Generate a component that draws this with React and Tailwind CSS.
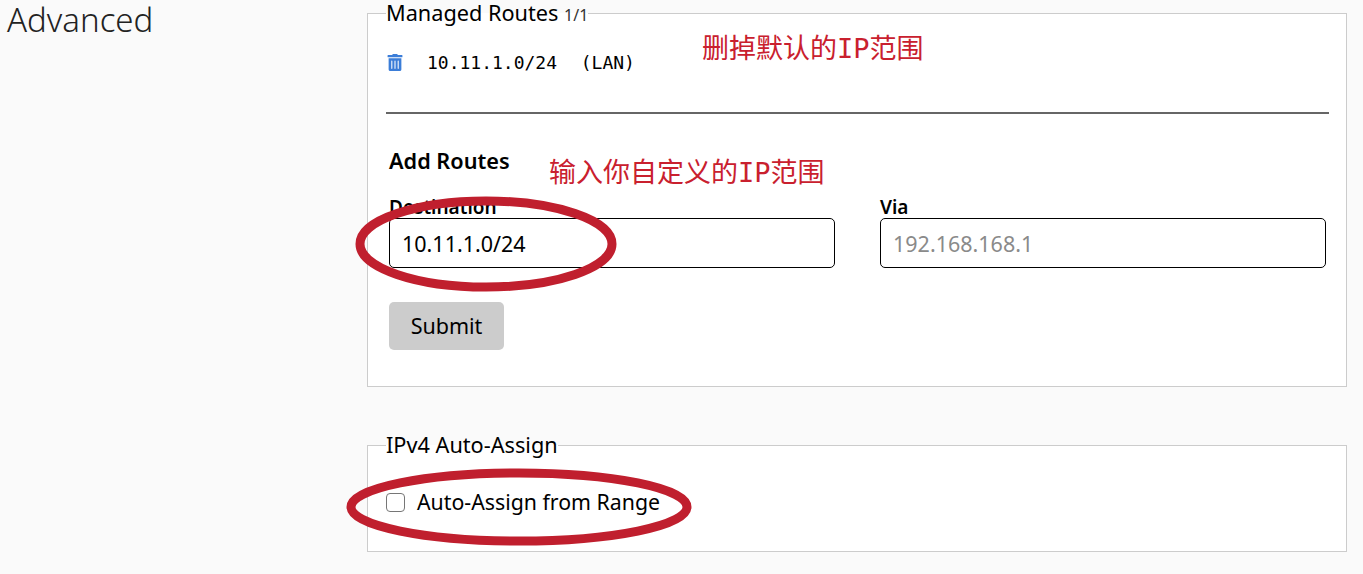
import { FaTrashAlt } from "react-icons/fa";

const ubuntu = "font-['Noto_Sans','Open_Sans',sans-serif]";
const note =
  "absolute whitespace-nowrap text-[27px] leading-[36px] text-[#c9202e] font-['DejaVu_Sans_Mono','Noto_Sans_CJK_SC',monospace]";

function Field({ label, value, placeholder }) {
  return (
    <label className="block w-[446px]">
      <span className="block h-[23px] text-[19px] leading-[24px] font-semibold text-black">
        {label}
      </span>
      <input
        readOnly
        value={value}
        placeholder={placeholder}
        className="block h-[50px] w-full rounded-[5px] border border-black bg-white px-3 text-[21.5px] text-black outline-none placeholder:text-[#8a8a8a]"
      />
    </label>
  );
}

export default function App() {
  return (
    <div className={`relative flex min-h-[574px] bg-[#fafafa] ${ubuntu}`}>
      {/* Section title */}
      <div className="w-[367px] shrink-0 pl-[7px]">
        <h2 className="text-[33px] leading-[40px] font-light text-[#222]">Advanced</h2>
      </div>

      <div className="w-[980px] shrink-0">
        {/* Managed routes */}
        <fieldset className="h-[387px] border border-[#ccc] bg-white px-[18px]">
          <legend className="h-[26px] text-[21.7px] leading-[26px] text-black">
            Managed Routes <span className="text-[16px] leading-none text-[#333]">1/1</span>
          </legend>
          <div className="flex h-[72px] items-center">
            <FaTrashAlt className="ml-[1px] h-[17px] w-[16px] text-[#3b7dd8]" />
            <span className="ml-[24px] whitespace-pre font-['DejaVu_Sans_Mono',monospace] text-[18px] text-black">
              {"10.11.1.0/24  "}
              <span className="ml-[2px]">(LAN)</span>
            </span>
          </div>
          <div className="mt-[14px] -mr-[1px] h-[2px] bg-[#666]" />
          <div className="pl-[3px]">
            <h3 className="mt-[34px] text-[21.7px] leading-[26px] font-semibold text-black">
              Add Routes
            </h3>
            <div className="mt-[21px] flex gap-[45px]">
              <Field label="Destination" value="10.11.1.0/24" />
              <Field label="Via" value="" placeholder="192.168.168.1" />
            </div>
            <button className="mt-[34px] h-[48px] w-[115px] rounded-[5px] bg-[#ccc] text-[21.5px] text-black">
              Submit
            </button>
          </div>
        </fieldset>

        {/* Auto-assign */}
        <fieldset className="mt-[45px] h-[120px] border border-[#ccc] bg-white px-[18px]">
          <legend className="h-[26px] text-[21.7px] leading-[26px] text-black">IPv4 Auto-Assign</legend>
          <label className="mt-[31px] flex items-center">
            <span className="h-[19px] w-[19px] rounded-[4px] border border-[#767676] bg-white" />
            <span className="ml-[12px] text-[21.3px] leading-[26px] text-black">
              Auto-Assign from Range
            </span>
          </label>
        </fieldset>
      </div>

      {/* Hand-drawn annotations over the screenshot */}
      <span className={`${note} left-[702px] top-[31px]`}>删掉默认的IP范围</span>
      <span className={`${note} left-[549px] top-[155px]`}>输入你自定义的IP范围</span>
      <svg className="pointer-events-none absolute left-0 top-0" width="1363" height="574">
        <ellipse cx="486" cy="244" rx="126" ry="43" fill="none" stroke="#c01f2e" strokeWidth="9" />
        <ellipse cx="519" cy="507" rx="168" ry="34" fill="none" stroke="#c01f2e" strokeWidth="9" />
      </svg>
    </div>
  );
}
